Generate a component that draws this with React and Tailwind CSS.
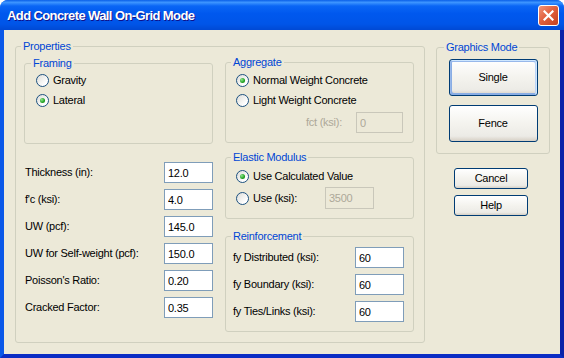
import React from "react";

const fields = [
  { label: "Thickness (in):", value: "12.0" },
  { label: "f'c (ksi):", value: "4.0" },
  { label: "UW (pcf):", value: "145.0" },
  { label: "UW for Self-weight (pcf):", value: "150.0" },
  { label: "Poisson's Ratio:", value: "0.20" },
  { label: "Cracked Factor:", value: "0.35" },
];

const rebar = [
  { label: "fy Distributed (ksi):", value: "60" },
  { label: "fy Boundary (ksi):", value: "60" },
  { label: "fy Ties/Links (ksi):", value: "60" },
];

function Group({ label, className = "", legendClass = "ml-[5px]", children }) {
  return (
    <fieldset className={`m-0 min-w-0 rounded-[3px] border border-[#d0d0bf] p-0 ${className}`}>
      <legend className={`px-[2px] leading-[14px] text-[#0046d5] ${legendClass}`}>{label}</legend>
      {children}
    </fieldset>
  );
}

function Radio({ checked, label }) {
  return (
    <div className="flex h-5 items-center gap-[4px]">
      <span className="flex h-[13px] w-[13px] shrink-0 items-center justify-center rounded-full border border-[#1c5180] bg-[linear-gradient(135deg,#dcdcd7_0%,#ffffff_75%)]">
        {checked && (
          <span className="h-[5px] w-[5px] rounded-full bg-[radial-gradient(circle_at_35%_35%,#8fe68f,#21a121_60%,#167c16)]" />
        )}
      </span>
      <span>{label}</span>
    </div>
  );
}

function TextBox({ value, disabled, className = "" }) {
  return (
    <input
      readOnly
      value={value}
      className={`px-[3px] outline-none ${
        disabled
          ? "border border-[#c9c7ba] bg-[#ece9d8] text-[#aca899]"
          : "border border-[#7f9db9] bg-white text-black"
      } ${className}`}
    />
  );
}

function XpButton({ children, isDefault, className = "" }) {
  return (
    <button
      className={`rounded-[3px] border border-[#003c74] bg-[linear-gradient(180deg,#ffffff_0%,#f4f3ee_50%,#ecebe6_86%,#d6d0c5_100%)] text-black ${
        isDefault
          ? "shadow-[inset_-1px_1px_#cee7ff,inset_1px_2px_#98b8ea,inset_-2px_2px_#bcd4f6,inset_1px_-1px_#89ade4,inset_2px_-2px_#89ade4]"
          : ""
      } ${className}`}
    >
      {children}
    </button>
  );
}

export default function App() {
  return (
    <div className="flex h-[358px] w-[564px] flex-col overflow-hidden rounded-t-[8px] bg-[linear-gradient(180deg,#0058ee_0%,#3593ff_4%,#288eff_6%,#127dff_8%,#036ffc_10%,#0262ee_14%,#0057e5_20%,#0054e3_24%,#0055eb_56%,#005bf5_66%,#026afe_76%,#0062ef_86%,#0052d6_92%,#0040ab_94%,#003092_100%)] font-['Liberation_Sans',Arial,sans-serif] text-[11px] tracking-[-0.25px] text-black">
      {/* Title bar */}
      <div className="flex h-[30px] shrink-0 items-center justify-between bg-[linear-gradient(180deg,#0a5fe8_0%,#3d95ff_8%,#0a66f5_20%,#0058ee_45%,#0055e8_80%,#0049d4_100%)] pl-[7px] pr-[5px]">
        <span className="pt-[2px] text-[13px] font-bold tracking-[-0.6px] text-white [text-shadow:1px_1px_#0f1089]">
          Add Concrete Wall On-Grid Mode
        </span>
        <div className="flex h-[21px] w-[21px] items-center justify-center rounded-[3px] border border-white bg-[linear-gradient(135deg,#f0947a_0%,#e2613f_45%,#c4401f_100%)]">
          <svg width="11" height="11" viewBox="0 0 11 11">
            <path d="M1.5 1.5 L9.5 9.5 M9.5 1.5 L1.5 9.5" stroke="white" strokeWidth="2.2" strokeLinecap="square" />
          </svg>
        </div>
      </div>

      {/* Client area with frame */}
      <div className="flex flex-1 border-b-[4px] border-l-[4px] border-r-[4px] border-b-[#0a2cc4] border-l-[#0a58e8] border-r-[#0a22a8]">
        <div className="flex flex-1 bg-[#ece9d8] pl-[11px]">
          {/* Properties */}
          <Group label="Properties" className="mt-[9px] h-[304px] w-[410px]">
            <div className="grid grid-cols-[189px_189px] gap-x-[12px] pl-[8px] pr-[10px]">
              {/* Left column */}
              <div className="flex flex-col">
                <Group label="Framing" legendClass="ml-[6px]" className="mt-[3px] h-[88px]">
                  <div className="pl-[11px]">
                    <Radio label="Gravity" />
                    <Radio label="Lateral" checked />
                  </div>
                </Group>
                <div className="mt-[18px] flex flex-col gap-[6px]">
                  {fields.map((f) => (
                    <div key={f.label} className="flex h-[21px] items-center pl-[1px]">
                      <span className="flex-1">{f.label}</span>
                      <TextBox value={f.value} className="h-[21px] w-[49px]" />
                    </div>
                  ))}
                </div>
              </div>

              {/* Right column */}
              <div className="flex flex-col">
                <Group label="Aggregate" className="mt-[2px] h-[88px]">
                  <div className="pl-[10px] pr-[10px] pt-[1px]">
                    <Radio label="Normal Weight Concrete" checked />
                    <Radio label="Light Weight Concrete" />
                    <div className="mt-[2px] flex items-center justify-end gap-[14px]">
                      <span className="text-[#aca899]">fct (ksi):</span>
                      <TextBox value="0" disabled className="h-[21px] w-[47px]" />
                    </div>
                  </div>
                </Group>

                <Group label="Elastic Modulus" className="mt-[7px] h-[69px]">
                  <div className="pl-[10px] pt-[2px]">
                    <Radio label="Use Calculated Value" checked />
                    <div className="mt-[1px] flex h-[22px] items-center">
                      <div className="w-[89px]">
                        <Radio label="Use (ksi):" />
                      </div>
                      <TextBox value="3500" disabled className="h-[22px] w-[49px]" />
                    </div>
                  </div>
                </Group>

                <Group label="Reinforcement" className="mt-[10px] h-[103px]">
                  <div className="flex flex-col gap-[6px] pl-[7px] pr-[9px] pt-[4px]">
                    {rebar.map((r) => (
                      <div key={r.label} className="flex h-[21px] items-center">
                        <span className="flex-1">{r.label}</span>
                        <TextBox value={r.value} className="h-[21px] w-[49px]" />
                      </div>
                    ))}
                  </div>
                </Group>
              </div>
            </div>
          </Group>

          {/* Right side */}
          <div className="ml-[11px] flex flex-col">
            <Group label="Graphics Mode" legendClass="ml-[7px]" className="mt-[10px] h-[114px] w-[114px]">
              <div className="flex flex-col items-center pt-[5px]">
                <XpButton isDefault className="h-[37px] w-[89px]">Single</XpButton>
                <XpButton className="mt-[9px] h-[37px] w-[89px]">Fence</XpButton>
              </div>
            </Group>
            <div className="ml-[18px] mt-[14px] flex flex-col gap-[6px]">
              <XpButton className="h-[21px] w-[74px]">Cancel</XpButton>
              <XpButton className="h-[21px] w-[74px]">Help</XpButton>
            </div>
          </div>
        </div>
      </div>
    </div>
  );
}
